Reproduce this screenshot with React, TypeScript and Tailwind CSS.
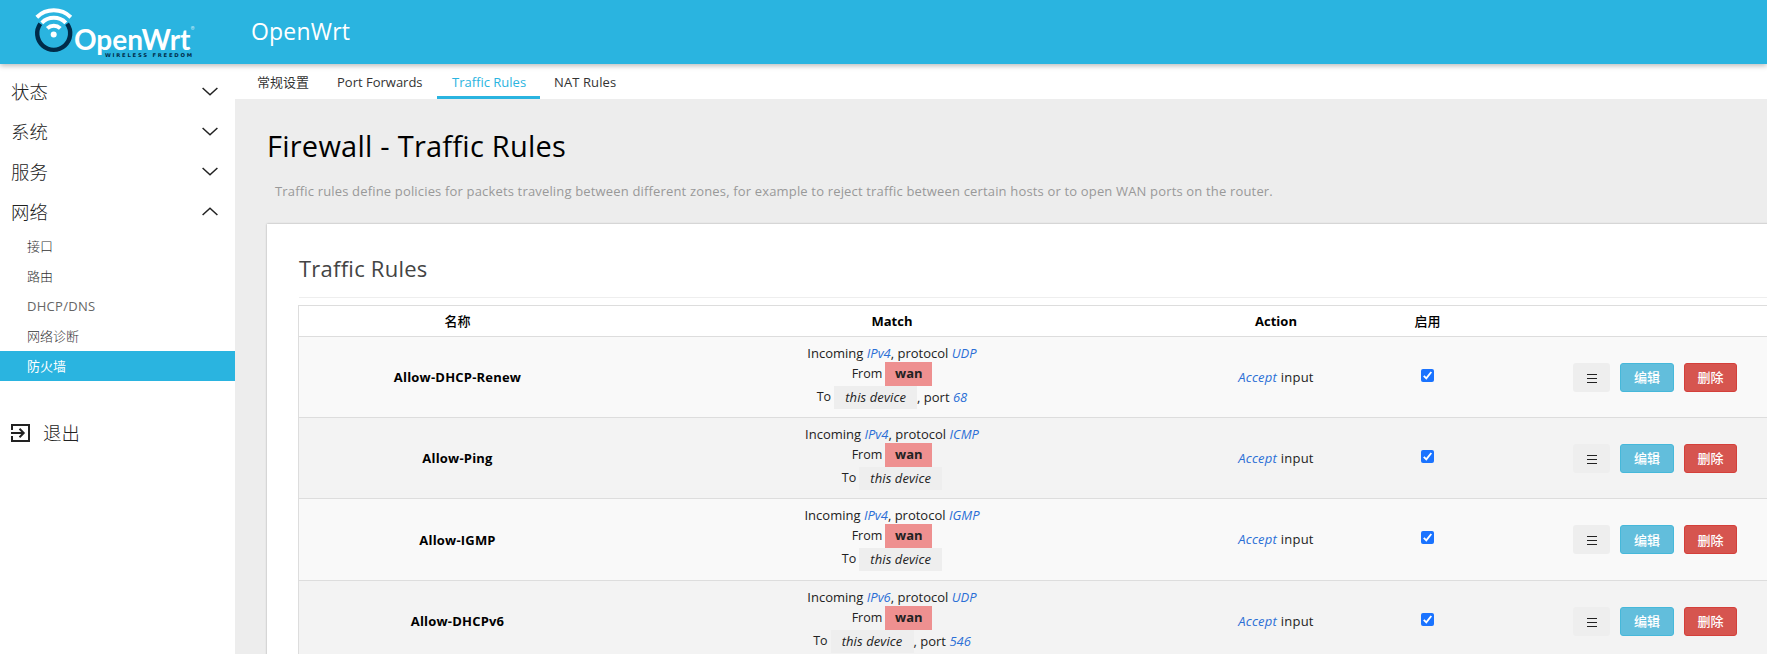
import React from "react";

const menu = [
  { label: "状态", open: false },
  { label: "系统", open: false },
  { label: "服务", open: false },
  { label: "网络", open: true },
];

const submenu = ["接口", "路由", "DHCP/DNS", "网络诊断", "防火墙"];

const rules = [
  { name: "Allow-DHCP-Renew", ip: "IPv4", proto: "UDP", port: "68", height: "h-[81px]" },
  { name: "Allow-Ping", ip: "IPv4", proto: "ICMP", port: "", height: "h-[81px]" },
  { name: "Allow-IGMP", ip: "IPv4", proto: "IGMP", port: "", height: "h-[82px]" },
  { name: "Allow-DHCPv6", ip: "IPv6", proto: "UDP", port: "546", height: "h-[81px]" },
];

const grid = "grid grid-cols-[317px_552px_216px_87px_300px]";

function Logo() {
  return (
    <svg width="165" height="56" viewBox="33 4 165 56" className="block">
      <path d="M40.3 23.7 A16.5 16.5 0 1 0 67.1 23.7" fill="none" stroke="#002b49" strokeWidth="4.4" />
      <g fill="none" stroke="#fff" strokeWidth="4">
        <path d="M36.8 17.2 A24.5 24.5 0 0 1 70.8 17.2" />
        <path d="M41.8 22.8 A17 17 0 0 1 65.8 22.8" />
        <path d="M47.3 28.4 A9.5 9.5 0 0 1 60.3 28.4" />
      </g>
      <circle cx="53.7" cy="34.6" r="3" fill="#fff" />
      <text x="74" y="49.5" textLength="116.5" lengthAdjust="spacingAndGlyphs" fill="#fff" className="font-['Lato',sans-serif] text-[29px] font-bold">OpenWrt</text>
      <text x="105" y="57" textLength="87" lengthAdjust="spacing" fill="#002b49" className="font-['DejaVu_Sans',sans-serif] text-[5.3px] font-bold">WIRELESS FREEDOM</text>
      <text x="190.8" y="31" fill="#fff" opacity=".7" className="font-['Inter',sans-serif] text-[5.5px]">®</text>
    </svg>
  );
}

function Chevron({ open }: { open: boolean }) {
  return (
    <svg width="16" height="9" viewBox="0 0 16 9" fill="none" stroke="#222" strokeWidth="1.5" className="mb-px">
      <path d={open ? "M.6 8 8 1.2 15.4 8" : "M.6 1 8 7.8 15.4 1"} />
    </svg>
  );
}

function Check() {
  return (
    <svg width="13" height="13" viewBox="0 0 13 13">
      <rect width="13" height="13" rx="2" fill="#1a73ff" />
      <path d="M2.8 6.8 5.3 9.3 10.3 3" fill="none" stroke="#fff" strokeWidth="1.9" />
    </svg>
  );
}

export default function App() {
  return (
    <div className="flex h-[654px] w-[1767px] flex-col overflow-hidden bg-white font-['Open_Sans','Noto_Sans_CJK_SC',sans-serif] text-[13px] text-[#222]">
      <header className="relative z-10 flex h-16 shrink-0 bg-[#2ab4e0] pl-[33px] pt-1 shadow-[0_2px_5px_rgba(0,0,0,0.26)]">
        <Logo />
        <div className="ml-[53px] mt-[10px] text-[23px] font-medium leading-[34px] tracking-[0.2px] text-white">OpenWrt</div>
      </header>
      <div className="flex min-h-0 flex-1">
        <aside className="w-[235px] shrink-0 pt-2">
          {menu.map((m) => (
            <div key={m.label} className="flex h-10 items-center justify-between pl-[11px] pr-[17px] text-[18.4px] font-light text-[#212121]">
              <span>{m.label}</span>
              <Chevron open={m.open} />
            </div>
          ))}
          <div className="-mt-px">
            {submenu.map((s, i) => (
              <div key={s} className={`flex h-[30px] items-center pl-[27px] pt-px ${i === 4 ? "bg-[#2ab4e0] text-white" : i === 2 ? "tracking-[0.3px] text-[#666]" : "font-light text-[#333]"}`}>{s}</div>
            ))}
          </div>
          <div className="mt-8 flex h-10 items-center gap-[13px] pl-[11px] text-[18.4px] font-light">
            <svg width="19" height="18" viewBox="0 0 19 18" fill="none" stroke="#222" strokeWidth="2">
              <path d="M1 6V1h17v16H1v-5M0 9h12M8.5 4.8 12.7 9 8.5 13.2" />
            </svg>
            <span>退出</span>
          </div>
        </aside>
        <main className="flex min-w-0 flex-1 flex-col overflow-hidden">
          <nav className="flex h-[35px] shrink-0 leading-[36px] text-[#333]">
            <span className="w-[87px] pl-[22px]">常规设置</span>
            <span className="w-[115px] pl-[15px]">Port Forwards</span>
            <span className="w-[103px] border-b-[3px] border-[#2ab4e0] pl-[15px] text-[#2ab4e0]">Traffic Rules</span>
            <span className="pl-[14px] tracking-[0.1px]">NAT Rules</span>
          </nav>
          <div className="flex-1 bg-[#ededed] pl-8 pt-[27px]">
            <h1 className="whitespace-nowrap text-[29px] leading-10 tracking-[0.24px] text-black">Firewall - Traffic Rules</h1>
            <p className="mt-[15px] whitespace-nowrap pl-2 leading-5 tracking-[0.165px] text-[#999]">Traffic rules define policies for packets traveling between different zones, for example to reject traffic between certain hosts or to open WAN ports on the router.</p>
            <section className="mt-[23px] h-[600px] w-[1560px] bg-white pl-[31px] pt-6 shadow-[0_0_2px_rgba(0,0,0,0.3)]">
              <h3 className="ml-px h-[50px] border-b border-[#eee] text-[22px] leading-[40px] tracking-[0.24px] text-[#444]">Traffic Rules</h3>
              <div className="mt-[7px] w-[1474px] border border-[#ddd]">
                <div className={`${grid} h-[30px] items-center pt-px text-center font-bold text-black`}>
                  <span className="font-medium">名称</span>
                  <span>Match</span>
                  <span>Action</span>
                  <span className="font-medium">启用</span>
                </div>
                {rules.map((r, i) => (
                  <div key={r.name} className={`${grid} ${r.height} items-center border-t border-[#ddd] text-center ${i % 2 ? "bg-[#f3f3f3]" : "bg-[#f9f9f9]"}`}>
                    <span className="pt-[2px] font-bold tracking-[0.2px] text-black">{r.name}</span>
                    <div className="pb-[2px]">
                      <div className="h-[18px] leading-[18px]">Incoming <i className="text-[#2b6fd6]">{r.ip}</i>, protocol <i className="text-[#2b6fd6]">{r.proto}</i></div>
                      <div className="flex h-6 justify-center gap-[3px] leading-[23px]">
                        <span className="text-[12.5px]">From</span>
                        <b className="h-6 w-[47px] bg-[#ee9090]">wan</b>
                      </div>
                      <div className="flex h-[23px] justify-center leading-[22px]">
                        <span className="mr-[3px] text-[12.5px]">To</span>
                        <i className="h-[23px] w-[83px] bg-[#eee] tracking-[0.1px]">this device</i>
                        {r.port && <span>, port <i className="text-[#2b6fd6]">{r.port}</i></span>}
                      </div>
                    </div>
                    <span className="pt-px tracking-[0.25px]"><i className="text-[#2b6fd6]">Accept</i> input</span>
                    <span className="flex justify-center pb-1"><Check /></span>
                    <div className="flex pl-[102px]">
                      <span className="flex h-[29px] w-[37px] items-center justify-center rounded-[3px] bg-[#eee]">
                        <svg width="10" height="9" viewBox="0 0 10 9" stroke="#222" className="mt-[2px]">
                          <path d="M0 .5h10M0 4.5h10M0 8.5h10" />
                        </svg>
                      </span>
                      <span className="ml-[10px] flex h-[29px] w-[54px] items-center justify-center rounded-[3px] border border-[#46b8da] bg-[#62bedc] pt-[2px] font-medium text-white">编辑</span>
                      <span className="ml-[10px] flex h-[29px] w-[53px] items-center justify-center rounded-[3px] border border-[#d43f3a] bg-[#d6554f] pt-[2px] font-medium text-white">删除</span>
                    </div>
                  </div>
                ))}
              </div>
            </section>
          </div>
        </main>
      </div>
    </div>
  );
}
